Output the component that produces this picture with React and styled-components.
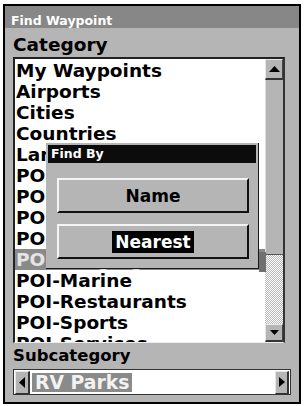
import React from 'react';
import styled, { createGlobalStyle } from 'styled-components';

const GlobalStyle = createGlobalStyle`
  body {
    margin: 0;
    background: #fff;
    font-family: "DejaVu Sans", "Liberation Sans", sans-serif;
  }
`;

const Frame = styled.div`
  box-sizing: border-box;
  margin: 4px 0 0 3px;
  width: 298px;
  height: 400px;
  border: 2px solid #000;
  display: flex;
  flex-direction: column;
`;

const TitleBar = styled.div`
  box-sizing: border-box;
  height: 22px;
  padding: 8px 0 0 6px;
  line-height: 14px;
  background: #878787;
  color: #fff;
  font-weight: bold;
  font-size: 12.5px;
`;

const Panel = styled.div`
  position: relative;
  flex: 1;
  background: #b5b5b5;
  padding: 0 8px 0 8px;
  display: flex;
  flex-direction: column;
`;

const Label = styled.div`
  box-sizing: border-box;
  height: ${(p) => p.$h}px;
  padding-top: ${(p) => p.$pt}px;
  font-weight: bold;
  font-size: ${(p) => p.$size}px;
  line-height: 20px;
  color: #000;
`;

const ListBox = styled.div`
  box-sizing: border-box;
  width: 272px;
  height: 286px;
  display: flex;
  border-top: 2px solid #222;
  border-left: 2px solid #222;
  border-right: 2px solid #333;
  border-bottom: 1px solid #ececec;
`;

const Items = styled.div`
  flex: 1;
  padding-top: 1px;
  background: #fff;
  overflow: hidden;
`;

const Row = styled.div`
  height: 21px;
  line-height: 21px;
  padding-left: 1px;
  font-weight: bold;
  font-size: 18.5px;
  white-space: nowrap;
  background: ${(p) => (p.$selected ? '#8a8a8a' : 'transparent')};
  color: ${(p) => (p.$selected ? '#e4e4e4' : '#000')};
`;

const ScrollBar = styled.div`
  width: 18px;
  display: flex;
  flex-direction: column;
  background-color: #fff;
  background-image: repeating-conic-gradient(#b8b8b8 0 25%, #fff 0 50%);
  background-size: 2px 2px;
`;

const ScrollButton = styled.div`
  box-sizing: border-box;
  height: ${(p) => p.$h}px;
  background: #b5b5b5;
  border-top: 1px solid #e6e6e6;
  border-left: 1px solid #e6e6e6;
  border-right: 1px solid #444;
  border-bottom: 2px solid #333;
  display: flex;
  align-items: center;
  justify-content: center;
`;

const Thumb = styled.div`
  box-sizing: border-box;
  height: 175px;
  background: #b5b5b5;
  border-left: 1px solid #dcdcdc;
  border-bottom: 1px solid #555;
`;

const Track = styled.div`
  flex: 1;
`;

const Field = styled.div`
  box-sizing: border-box;
  width: 278px;
  height: 26px;
  display: flex;
  align-items: center;
  background: #fff;
  border: 1px solid #333;
  padding: 0 1px;
  gap: 2px;
`;

const ArrowButton = styled.div`
  box-sizing: border-box;
  width: ${(p) => p.$w}px;
  height: 23px;
  background: #b5b5b5;
  border-top: 1px solid #e6e6e6;
  border-left: 1px solid #e6e6e6;
  border-right: 2px solid #333;
  border-bottom: 1px solid #333;
  display: flex;
  align-items: center;
  justify-content: center;
`;

const FieldValue = styled.div`
  height: 19px;
  line-height: 19px;
  padding: 0 3px;
  background: #8a8a8a;
  color: #f2f2f2;
  font-weight: bold;
  font-size: 18.8px;
`;

const FieldFill = styled.div`
  flex: 1;
`;

const Dialog = styled.div`
  position: absolute;
  left: 41px;
  top: 115px;
  box-sizing: border-box;
  width: 213px;
  height: 126px;
  padding: 2px 2px 0 2px;
  background: #b5b5b5;
  border-right: 1px solid #1a1a1a;
  border-bottom: 1px solid #1a1a1a;
  display: flex;
  flex-direction: column;

  &::after {
    content: '';
    position: absolute;
    right: -8px;
    bottom: -4px;
    width: 7px;
    height: 20px;
    background: #707070;
  }
`;

const DialogTitle = styled.div`
  height: 18px;
  line-height: 18px;
  padding-left: 3px;
  background: #0c0c0c;
  color: #fff;
  font-weight: bold;
  font-size: 12.5px;
`;

const DialogBody = styled.div`
  display: flex;
  flex-direction: column;
  gap: 11px;
  padding: 15px 0 0 9px;
`;

const Button = styled.div`
  box-sizing: border-box;
  width: 192px;
  height: 35px;
  background: #b5b5b5;
  border-top: 2px solid #f4f4f4;
  border-left: 2px solid #f4f4f4;
  border-right: 2px solid #111;
  border-bottom: 2px solid #111;
  display: flex;
  align-items: center;
  justify-content: center;
  font-weight: bold;
  font-size: 17px;
  color: #000;
`;

const ButtonText = styled.span`
  padding: 1px 3px;
  line-height: 20px;
  background: ${(p) => (p.$active ? '#000' : 'transparent')};
  color: ${(p) => (p.$active ? '#fff' : '#000')};
`;

const Triangle = ({ dir, w, h }) => {
  const pts = {
    up: `0,${h} ${w},${h} ${w / 2},0`,
    down: `0,0 ${w},0 ${w / 2},${h}`,
    left: `${w},0 ${w},${h} 0,${h / 2}`,
    right: `0,0 0,${h} ${w},${h / 2}`,
  }[dir];
  return (
    <svg width={w} height={h} viewBox={`0 0 ${w} ${h}`}>
      <polygon points={pts} fill="#000" />
    </svg>
  );
};

const categories = [
  'My Waypoints',
  'Airports',
  'Cities',
  'Countries',
  'Landmarks',
  'POI-Attractions',
  'POI-Automotive',
  'POI-Entertainment',
  'POI-Government',
  'POI-Lodging',
  'POI-Marine',
  'POI-Restaurants',
  'POI-Sports',
  'POI-Services',
];

const App = () => {
  return (
    <>
      <GlobalStyle />
      <Frame>
        <TitleBar>Find Waypoint</TitleBar>
        <Panel>
          <Label $h={29} $pt={7} $size={18.5}>Category</Label>
          <ListBox>
            <Items>
              {categories.map((c, i) => (
                <Row key={c} $selected={i === 9}>{c}</Row>
              ))}
            </Items>
            <ScrollBar>
              <ScrollButton $h={21}>
                <Triangle dir="up" w={11} h={6} />
              </ScrollButton>
              <Thumb />
              <Track />
              <ScrollButton $h={18}>
                <Triangle dir="down" w={9} h={5} />
              </ScrollButton>
            </ScrollBar>
          </ListBox>
          <Label $h={26} $pt={3} $size={16.5}>Subcategory</Label>
          <Field>
            <ArrowButton $w={15}>
              <Triangle dir="left" w={6} h={11} />
            </ArrowButton>
            <FieldValue>RV Parks</FieldValue>
            <FieldFill />
            <ArrowButton $w={14}>
              <Triangle dir="right" w={6} h={10} />
            </ArrowButton>
          </Field>

          <Dialog>
            <DialogTitle>Find By</DialogTitle>
            <DialogBody>
              <Button>
                <ButtonText>Name</ButtonText>
              </Button>
              <Button>
                <ButtonText $active>Nearest</ButtonText>
              </Button>
            </DialogBody>
          </Dialog>
        </Panel>
      </Frame>
    </>
  );
};

export default App;
